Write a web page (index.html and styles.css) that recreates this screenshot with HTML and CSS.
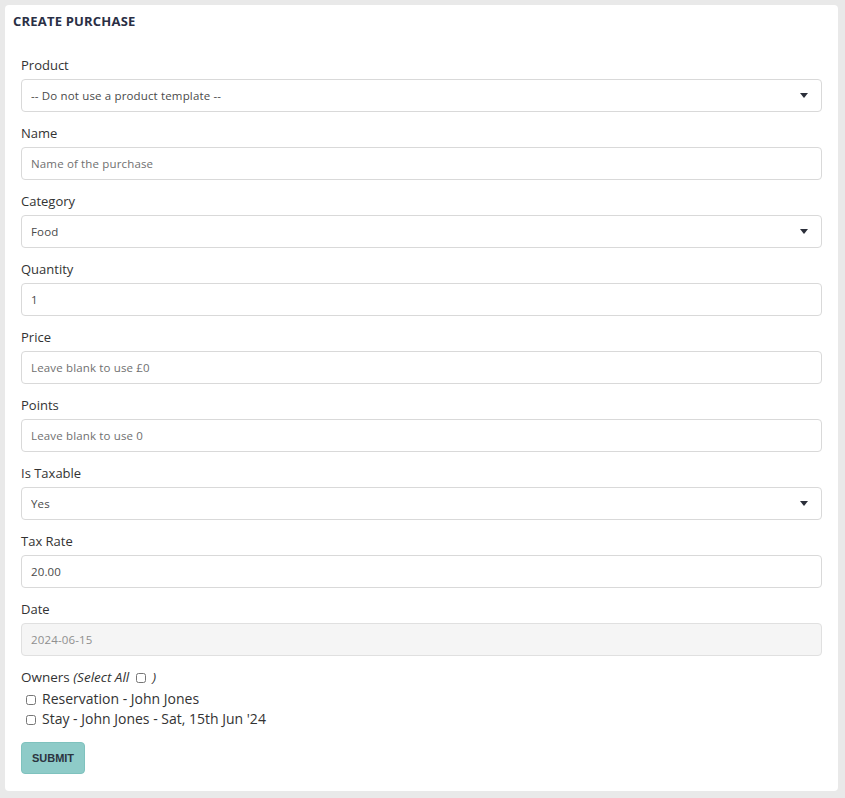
FILE: index.html
```html
<!DOCTYPE html>
<html lang="en">
<head>
<meta charset="utf-8">
<title>Create Purchase</title>
<link rel="stylesheet" href="styles.css">
</head>
<body>
<div class="card">
  <div class="card-header">CREATE PURCHASE</div>
  <form class="form">
    <div class="field">
      <label class="label">Product</label>
      <div class="select-wrap">
        <select class="control">
          <option>-- Do not use a product template --</option>
        </select>
      </div>
    </div>
    <div class="field">
      <label class="label">Name</label>
      <input class="control" type="text" placeholder="Name of the purchase">
    </div>
    <div class="field">
      <label class="label">Category</label>
      <div class="select-wrap">
        <select class="control">
          <option>Food</option>
        </select>
      </div>
    </div>
    <div class="field">
      <label class="label">Quantity</label>
      <input class="control" type="text" value="1">
    </div>
    <div class="field">
      <label class="label">Price</label>
      <input class="control" type="text" placeholder="Leave blank to use £0">
    </div>
    <div class="field">
      <label class="label">Points</label>
      <input class="control" type="text" placeholder="Leave blank to use 0">
    </div>
    <div class="field">
      <label class="label">Is Taxable</label>
      <div class="select-wrap">
        <select class="control">
          <option>Yes</option>
        </select>
      </div>
    </div>
    <div class="field">
      <label class="label">Tax Rate</label>
      <input class="control" type="text" value="20.00">
    </div>
    <div class="field">
      <label class="label">Date</label>
      <input class="control disabled" type="text" value="2024-06-15" disabled>
    </div>
    <div class="owners">
      <div class="label">Owners <span class="select-all">(Select All <input class="check" type="checkbox"> )</span></div>
      <label class="check-row"><input class="check" type="checkbox">Reservation - John Jones</label>
      <label class="check-row"><input class="check" type="checkbox">Stay - John Jones - Sat, 15th Jun '24</label>
    </div>
    <button class="submit" type="button">SUBMIT</button>
  </form>
</div>
</body>
</html>
```

FILE: styles.css
```css
html, body {
  margin: 0;
  padding: 0;
}
body {
  background: #e9e9e9;
  font-family: "Open Sans", "Noto Sans", sans-serif;
  color: #333333;
  padding: 5px 7px 7px 5px;
}
.card {
  background: #ffffff;
  border-radius: 4px;
  height: 786px;
  box-sizing: border-box;
}
.card-header {
  height: 32px;
  line-height: 33px;
  padding-left: 8px;
  font-size: 13px;
  font-weight: 700;
  color: #2a2f45;
  letter-spacing: 0.2px;
}
.form {
  padding: 18px 16px 0 16px;
}
.field {
  margin-bottom: 11px;
}
.label {
  display: block;
  font-size: 13px;
  line-height: 20px;
  margin-bottom: 4px;
  color: #333333;
}
.control {
  display: block;
  width: 100%;
  box-sizing: border-box;
  height: 33px;
  border: 1px solid #d9d9d9;
  border-radius: 4px;
  padding: 0 9px;
  font-family: inherit;
  font-size: 11.5px;
  letter-spacing: 0.15px;
  color: #4a4a4a;
  background: #ffffff;
  outline: none;
}
.control::placeholder {
  color: #707070;
}
.control.disabled {
  background: #f5f5f5;
  color: #8f8f8f;
  border-color: #e0e0e0;
}
.select-wrap {
  position: relative;
}
select.control {
  appearance: none;
  -webkit-appearance: none;
}
.select-wrap::after {
  content: "";
  position: absolute;
  right: 14px;
  top: 14px;
  width: 0;
  height: 0;
  border-left: 4px solid transparent;
  border-right: 4px solid transparent;
  border-top: 5px solid #2b2f3a;
  pointer-events: none;
}
.owners {
  margin-bottom: 13px;
}
.owners .label {
  margin-bottom: 2px;
  font-size: 13.5px;
}
.select-all {
  font-style: italic;
}
.check {
  width: 10px;
  height: 10px;
  margin: 0 3px 0 3px;
  vertical-align: -1px;
}
.check-row {
  display: block;
  font-size: 14px;
  line-height: 20px;
}
.check-row .check {
  margin-left: 5px;
  margin-right: 6px;
}
.submit {
  display: block;
  width: 64px;
  height: 32px;
  background: #8ecbc8;
  border: 1px solid #7fc2be;
  border-radius: 4px;
  font-family: "Liberation Sans", Arial, sans-serif;
  font-size: 11px;
  font-weight: 700;
  color: #2b3440;
  padding: 0;
}
```
